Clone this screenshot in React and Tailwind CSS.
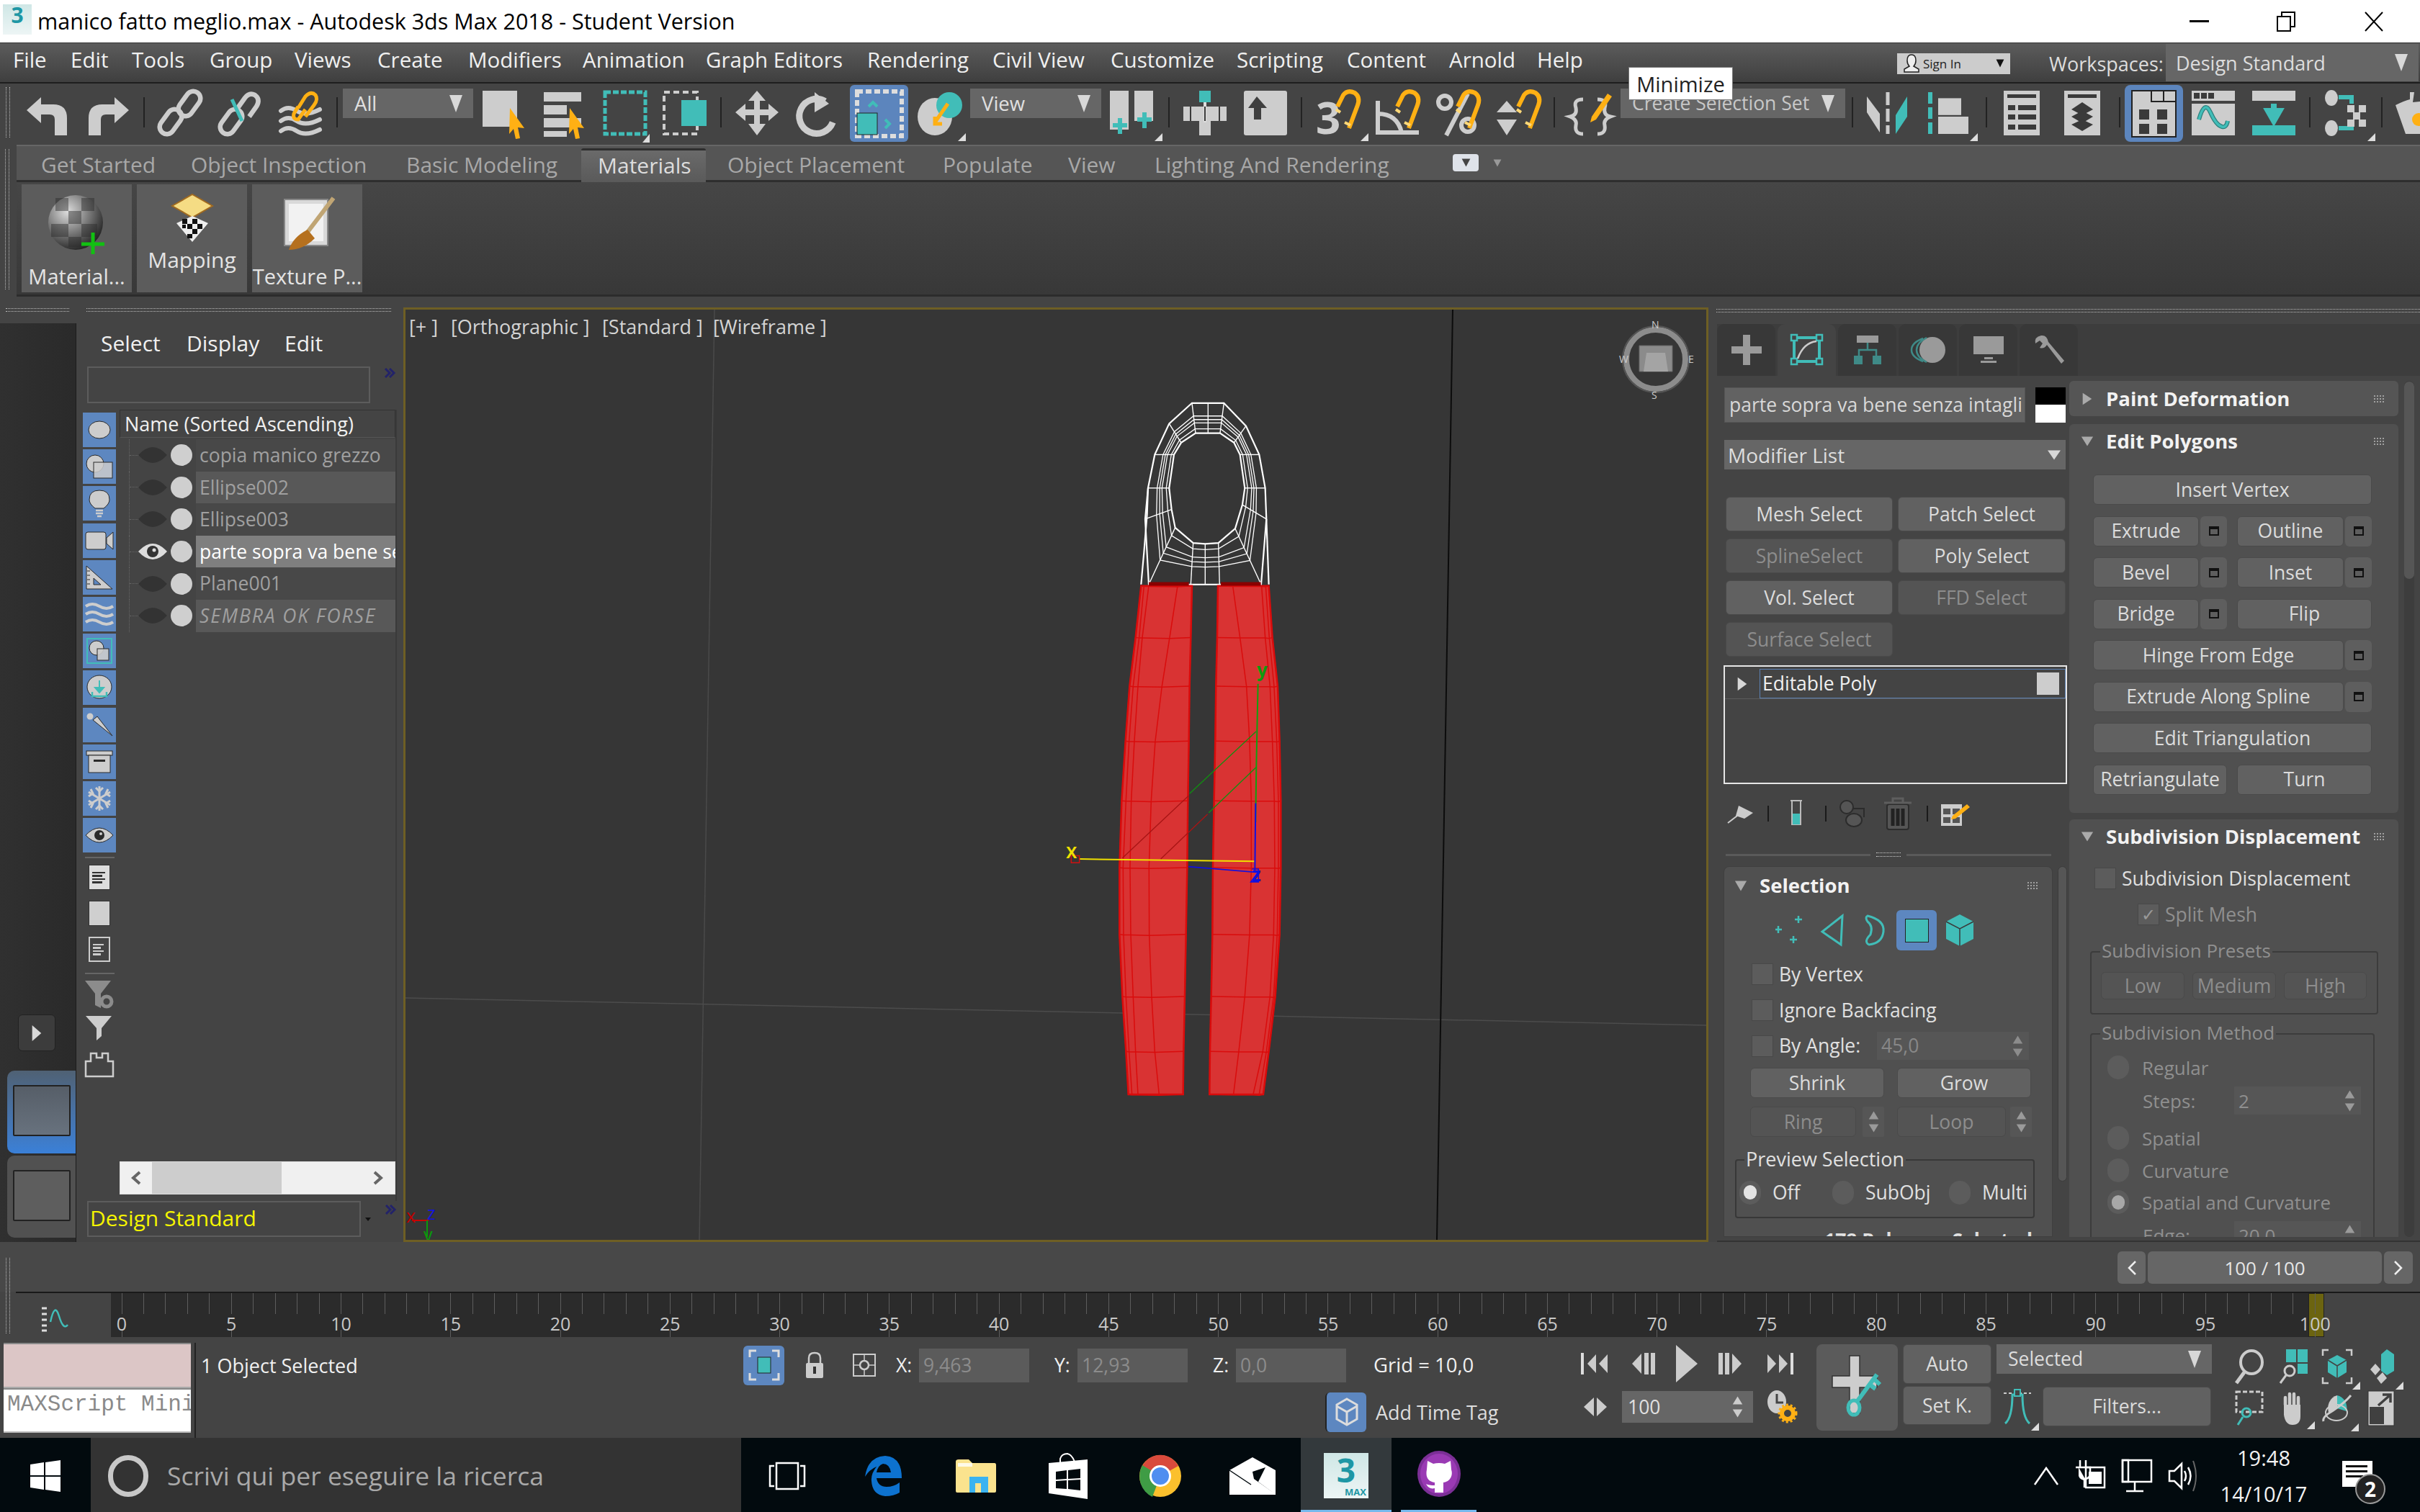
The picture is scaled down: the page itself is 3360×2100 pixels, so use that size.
import React from "react";

const G = "#cdcdcd", T = "#41bdb8", O = "#ffb014", D = "#3a3a3a";

const Ic = ({ c = "w-[60px] h-[60px]", v = "0 0 60 60", children }) => (
  <svg viewBox={v} className={c + " shrink-0 overflow-visible"}>{children}</svg>
);
const Fly = ({ x = 58, y = 70 }) => <polygon points={`${x},${y} ${x + 11},${y} ${x + 11},${y - 11}`} fill="#ddd" />;
const Tri = ({ c = "w-[20px] h-[26px]", down = true, col = "#d8d8d8" }) => (
  <svg viewBox="0 0 20 26" preserveAspectRatio="none" className={c + " shrink-0"}><polygon points={down ? "1,1 19,1 10,25" : "1,25 19,25 10,1"} fill={col} /></svg>
);
const RA = ({ c = "w-[12px] h-[18px]", col = "#d8d8d8" }) => (
  <svg viewBox="0 0 20 26" preserveAspectRatio="none" className={c + " shrink-0"}><polygon points="1,1 19,13 1,25" fill={col} /></svg>
);
const Chev = () => (
  <Ic c="w-[15px] h-[14px]" v="0 0 15 14"><path d="M1 1 L7 7 L1 13 M7 1 L13 7 L7 13" fill="none" stroke="#232369" strokeWidth="3" /></Ic>
);
const Sep = ({ c }) => <div className={"w-[2px] h-[42px] bg-[#222] shrink-0 " + c} />;

const Drop = ({ c, t, tc = "text-[#e0e0e0] text-[27.5px]" }) => (
  <div className={"flex items-center justify-between bg-[#666] shrink-0 pl-[16px] pr-[14px] " + c}>
    <span className={"leading-none whitespace-nowrap " + tc}>{t}</span>
    <Tri />
  </div>
);

const Wave = ({ y = 0, col = G, sw = 6 }) => <path d={`M2 ${y + 6} Q12 ${y - 2} 24 ${y + 6} T56 ${y + 4}`} fill="none" stroke={col} strokeWidth={sw} strokeLinecap="round" />;
const Cursor = ({ x = 0, y = 0 }) => <polygon transform={`translate(${x} ${y})`} points="0,0 20,28 11,27 14,42 8,43 5,29 -1,36" fill={O} />;
const Magnet = ({ x = 0, y = 0 }) => (
  <g transform={`translate(${x} ${y})`} fill="none" stroke={O} strokeWidth="6">
    <path d="M2 22 L10 6 Q16 -2 26 3 Q34 9 30 20 L18 52" />
    <path d="M0 26 L6 30 M12 44 L20 48" stroke="#ffd878" strokeWidth="4" />
  </g>
);

const Undo = ({ flip }) => (
  <Ic><path transform={flip ? "matrix(-1 0 0 1 60 0)" : undefined} d="M1 27 L21 9 V19 H38 Q57 19 57 38 V62 H40 V40 Q40 33 33 33 H21 V45 Z" fill={G} /></Ic>
);

const LinkIc = ({ mid }) => (
  <Ic>
    <g fill="none" stroke={G} strokeWidth="6.5">
      <rect x="7" y="24" width="20" height="38" rx="10" transform="rotate(36 17 43)" />
      {!mid && <rect x="33" y="-1" width="20" height="38" rx="10" transform="rotate(36 43 18)" />}
      {mid && <path d="M26 24 L36 10 Q42 2 50 6 Q58 12 52 22 L42 36" />}
    </g>
    {mid && <path d="M18 12 L32 42" stroke={T} strokeWidth="5" />}
  </Ic>
);

const Bar4 = () => (
  <g fill={G}>
    <rect x="2" y="2" width="52" height="13" /><rect x="2" y="20" width="32" height="13" /><rect x="2" y="38" width="52" height="13" /><rect x="2" y="56" width="32" height="8" />
  </g>
);

const Toolbar = () => (
  <div className="h-[85px] flex items-center bg-[#444] shrink-0 relative pb-[5px]">
    <div className="w-[6px] h-[70px] ml-[8px] border-x border-dotted border-[#bbb] shrink-0" />
    <div className="ml-[22px]"><Undo /></div>
    <div className="ml-[24px]"><Undo flip /></div>
    <Sep c="mx-[19px]" />
    <LinkIc />
    <div className="ml-[24px]"><LinkIc mid /></div>
    <div className="ml-[24px]"><Ic>
      <Wave y={22} /><Wave y={36} /><Wave y={50} />
      <g fill="none" stroke={O} strokeWidth="5"><path d="M26 22 L20 32 Q18 40 26 40 L36 26" /><path d="M26 24 L36 8 Q44 0 50 6 Q54 12 48 20 L36 36" /></g>
    </Ic></div>
    <Sep c="ml-[19px] mr-[7px]" />
    <Drop c="w-[181px] h-[41px] mb-[-2px] self-start mt-[7px]" t="All" />
    <div className="ml-[13px]"><Ic>
      <rect x="0" y="0" width="48" height="50" fill={G} /><Cursor x={38} y={24} />
    </Ic></div>
    <div className="ml-[23px]"><Ic><Bar4 /><Cursor x={38} y={24} /></Ic></div>
    <div className="ml-[25px]"><Ic>
      <rect x="2" y="2" width="56" height="58" fill="none" stroke={T} strokeWidth="5" strokeDasharray="8 3" />
      <polygon points="54,72 64,72 64,60" fill="#ddd" />
    </Ic></div>
    <div className="ml-[23px]"><Ic>
      <rect x="1" y="2" width="46" height="58" fill="none" stroke={G} strokeWidth="4" strokeDasharray="8 5" /><rect x="25" y="13" width="35" height="36" fill={T} />
    </Ic></div>
    <Sep c="mx-[19px]" />
    <Ic>
      <path d="M30 0 L42 14 H34 V26 H46 V18 L60 30 L46 42 V34 H34 V46 H42 L30 62 L18 46 H26 V34 H14 V42 L0 30 L14 18 V26 H26 V14 H18 Z" fill={G} />
    </Ic>
    <div className="ml-[24px]"><Ic>
      <path d="M34 12 A24 24 0 1 0 54 36" fill="none" stroke={G} strokeWidth="9" transform="rotate(20 30 32)" />
      <polygon points="26,2 46,18 26,30" fill={G} />
    </Ic></div>
    <div className="ml-[15px] mt-[3px] w-[81px] h-[79px] bg-[#5c85bd] rounded-[6px] flex items-center justify-center shrink-0"><Ic c="w-[70px] h-[68px]" v="0 0 70 68">
      <rect x="4" y="3" width="62" height="62" fill="none" stroke="#ddd" strokeWidth="6" strokeDasharray="8 4" />
      <rect x="4" y="33" width="28" height="30" fill={T} stroke="#222" />
      <path d="M20 24 l6 -6 l6 6 M43 42 l6 6 l-6 6" fill="none" stroke={T} strokeWidth="4" />
    </Ic></div>
    <div className="ml-[13px]"><Ic>
      <ellipse cx="24" cy="36" rx="24" ry="26" fill={G} /><circle cx="44" cy="20" r="18" fill={T} />
      <path d="M42 18 L24 44 M24 36 V46 H34" stroke={O} strokeWidth="5" fill="none" />
      <Fly x={56} />
    </Ic></div>
    <Drop c="w-[182px] h-[41px] self-start mt-[7px] ml-[13px]" t="View" />
    <div className="ml-[12px]"><Ic>
      <rect x="0" y="0" width="26" height="54" fill={G} /><rect x="34" y="0" width="26" height="42" fill={G} />
      <path d="M14 38 V60 M4 48 H24 M48 30 V52 M38 40 H58" stroke={T} strokeWidth="6" />
      <Fly x={62} />
    </Ic></div>
    <Sep c="ml-[21px] mr-[19px]" />
    <Ic>
      <rect x="22" y="0" width="16" height="16" fill={T} /><rect x="0" y="22" width="60" height="20" fill={G} />
      <rect x="22" y="42" width="16" height="20" fill={G} /><path d="M30 16 V44" stroke="#ddd" strokeWidth="4" />
      <path d="M10 22 v20 M30 22 V42 M50 22 V42" stroke="#3a3a3a" strokeWidth="2" />
    </Ic>
    <div className="ml-[24px]"><Ic>
      <rect x="0" y="0" width="60" height="62" rx="3" fill={G} />
      <path d="M18 8 L6 24 H14 V40 H24 V24 H32 Z" fill="#3f3f3f" />
    </Ic></div>
    <Sep c="mx-[19px]" />
    <Ic>
      <text x="0" y="60" fontSize="60" fontWeight="700" fill={G} fontFamily="Open Sans">3</text>
      <Magnet x={28} y={0} /><Fly x={62} />
    </Ic>
    <div className="ml-[23px]"><Ic>
      <path d="M3 14 V58 H60 M3 58 V32 Q30 32 36 58" fill="none" stroke={G} strokeWidth="6" />
      <Magnet x={28} y={0} />
    </Ic></div>
    <div className="ml-[24px]"><Ic>
      <circle cx="12" cy="16" r="9" fill="none" stroke={G} strokeWidth="6" /><circle cx="44" cy="48" r="9" fill="none" stroke={G} strokeWidth="6" />
      <path d="M44 4 L14 62" stroke={G} strokeWidth="6" /><Magnet x={28} y={0} />
    </Ic></div>
    <div className="ml-[24px]"><Ic>
      <polygon points="14,14 28,30 0,30" fill={G} /><polygon points="0,40 28,40 14,62" fill={G} /><Magnet x={28} y={0} />
    </Ic></div>
    <Sep c="mx-[19px]" />
    <Ic>
      <path d="M20 12 Q6 12 10 24 Q12 34 2 36 Q12 40 10 48 Q8 60 20 60 M40 12 Q54 12 50 24 Q48 34 58 36 Q48 40 50 48 Q52 60 40 60" fill="none" stroke={G} strokeWidth="5" />
      <path d="M32 36 L54 4 L60 8 L38 40 L30 44 Z" fill={O} />
    </Ic>
    <div className="w-[14px]" />
    <Drop c="w-[312px] h-[41px] self-start mt-[7px] pl-[10px]" t="Create Selection Set" tc="text-[#c8c8c8] text-[26.5px]" />
    <Sep c="ml-[9px] mr-[19px]" />
    <Ic>
      <polygon points="0,12 18,36 18,62 0,34" fill={G} transform="translate(0 -4)" />
      <path d="M29 2 V60" stroke={G} strokeWidth="5" strokeDasharray="18 5" /><polygon points="56,8 40,34 40,60 56,36" fill={T} />
    </Ic>
    <div className="ml-[25px]"><Ic>
      <path d="M3 2 V62" stroke={T} strokeWidth="6" strokeDasharray="16 5" /><rect x="14" y="12" width="32" height="18" fill={G} transform="scale(1 1.3) translate(0 -4)" /><rect x="14" y="36" width="42" height="24" fill={G} /><Fly x={58} />
    </Ic></div>
    <Sep c="ml-[20px] mr-[21px]" />
    <Ic>
      <rect x="2" y="0" width="50" height="62" fill={G} />
      <g fill="#3a3a3a"><rect x="7" y="5" width="40" height="5" /><rect x="8" y="20" width="10" height="7" /><rect x="22" y="20" width="25" height="7" /><rect x="8" y="33" width="10" height="7" /><rect x="22" y="33" width="25" height="7" /><rect x="8" y="47" width="10" height="7" /><rect x="22" y="47" width="25" height="7" /></g>
    </Ic>
    <div className="ml-[24px]"><Ic>
      <rect x="2" y="0" width="50" height="62" fill={G} /><rect x="7" y="5" width="40" height="5" fill="#3a3a3a" />
      <g fill="#3a3a3a"><polygon points="27,16 42,26 27,34 12,26" /><polygon points="27,28 42,36 27,45 12,36" /><polygon points="27,40 42,47 27,56 12,47" /></g>
    </Ic></div>
    <Sep c="ml-[18px] mr-[6px]" />
    <div className="w-[81px] h-[79px] mt-[3px] bg-[#5c85bd] rounded-[8px] flex items-center justify-center shrink-0"><Ic c="w-[64px] h-[66px]" v="0 0 64 66">
      <path d="M1 1 H28 V16 H62 V65 H1 Z" fill={G} stroke="#222" strokeWidth="2" /><path d="M28 1 H62 V16 H28 Z M45 1 V16" fill={G} stroke="#222" strokeWidth="2" />
      <g fill="#3a3a3a"><rect x="11" y="27" width="14" height="14" /><rect x="36" y="27" width="14" height="14" /><rect x="11" y="47" width="14" height="14" /><rect x="36" y="47" width="14" height="14" /></g>
    </Ic></div>
    <div className="ml-[12px]"><Ic>
      <rect x="0" y="0" width="60" height="14" fill={G} /><g fill="#3a3a3a"><rect x="3" y="3" width="8" height="8" /><rect x="13" y="3" width="8" height="8" /><rect x="23" y="3" width="8" height="8" /></g>
      <rect x="0" y="18" width="60" height="44" fill={G} />
      <path d="M10 40 Q18 12 26 30 T42 50 Q48 52 50 42" fill="none" stroke="#2c7f7c" strokeWidth="6" /><path d="M10 40 Q18 12 26 30 T42 50 Q48 52 50 42" fill="none" stroke={T} strokeWidth="3.5" />
    </Ic></div>
    <div className="ml-[24px]"><Ic>
      <rect x="0" y="0" width="60" height="14" fill={G} /><rect x="0" y="48" width="60" height="14" fill={T} />
      <path d="M30 18 V28 M22 28 H38 L30 42 Z" stroke={T} strokeWidth="8" fill={T} />
    </Ic></div>
    <Sep c="mx-[19px]" />
    <Ic>
      <ellipse cx="10" cy="10" rx="9" ry="11" fill={G} /><ellipse cx="10" cy="52" rx="9" ry="11" fill={G} />
      <path d="M20 9 H38 V18 M20 52 H38 V44" stroke={T} strokeWidth="6" fill="none" />
      <g fill={G}><rect x="32" y="20" width="10" height="10" /><rect x="48" y="20" width="10" height="10" /><rect x="40" y="30" width="10" height="10" /><rect x="32" y="40" width="10" height="10" /><rect x="48" y="40" width="10" height="10" /></g>
      <Fly x={60} />
    </Ic>
    <Sep c="ml-[19px] mr-[16px]" />
    <Ic c="w-[36px] h-[60px]" v="0 0 36 60">
      <path d="M2 20 Q14 14 22 12 V2 H28 L26 16 L44 14 L36 60 H16 Z" fill={G} /><circle cx="34" cy="40" r="9" fill={O} />
    </Ic>

    <div className="absolute left-[2261px] top-[-23px] w-[145px] h-[46px] bg-white border border-[#777] flex items-center justify-center z-30">
      <span className="text-[29px] leading-none text-[#222]">Minimize</span>
    </div>
  </div>
);

const Menu = () => {
  const items = [
    ["File", "w-[80px]"], ["Edit", "w-[85px]"], ["Tools", "w-[108px]"], ["Group", "w-[118px]"], ["Views", "w-[115px]"], ["Create", "w-[126px]"],
    ["Modifiers", "w-[159px]"], ["Animation", "w-[171px]"], ["Graph Editors", "w-[224px]"], ["Rendering", "w-[174px]"], ["Civil View", "w-[164px]"],
    ["Customize", "w-[175px]"], ["Scripting", "w-[153px]"], ["Content", "w-[142px]"], ["Arnold", "w-[122px]"], ["Help", "w-[90px]"],
  ];
  return (
    <div className="h-[57px] flex items-center bg-linear-to-b from-[#5c5c5c] to-[#3f3f3f] border-b-2 border-[#1e1e1e] border-t border-t-[#333] pl-[18px] shrink-0 relative pb-[8px]">
      {items.map(([t, w]) => <div key={t} className={"text-[29.5px] leading-none text-[#f0f0f0] whitespace-nowrap shrink-0 " + w}>{t}</div>)}
      <div className="ml-[410px] w-[157px] h-[29px] bg-[#ccc] flex items-center pl-[8px] shrink-0 mt-[10px]">
        <Ic c="w-[24px] h-[26px]" v="0 0 24 26"><path d="M12 1 Q18 1 18 9 Q18 14 15 17 L22 21 V25 H2 V21 L9 17 Q6 14 6 9 Q6 1 12 1Z" fill="#eee" stroke="#222" strokeWidth="1.5" /></Ic>
        <span className="text-[17px] ml-[4px] leading-none text-[#222]">Sign In</span>
        <div className="ml-auto mr-[8px]"><Tri c="w-[12px] h-[12px]" col="#111" /></div>
      </div>
      <div className="ml-[54px] text-[27px] leading-none text-[#ddd] shrink-0 w-[162px] mt-[10px] whitespace-nowrap">Workspaces:</div>
      <div className="w-[351px] h-[52px] self-start mt-[1px] bg-[#666] flex items-center justify-between pl-[14px] pr-[14px] shrink-0">
        <span className="text-[27px] leading-none text-[#ddd]">Design Standard</span><Tri />
      </div>
    </div>
  );
};

const Ribbon = () => {
  const tabs = [["Get Started", "w-[208px]"], ["Object Inspection", "w-[299px]"], ["Basic Modeling", "w-[243px]"]];
  const tabs2 = [["Object Placement", "w-[299px]"], ["Populate", "w-[174px]"], ["View", "w-[120px]"], ["Lighting And Rendering", "w-[414px]"]];
  return (
    <div className="flex shrink-0 h-[211px]">
      <div className="w-[23px] shrink-0 flex justify-start pl-[7px] pt-[6px]"><div className="w-[6px] h-[195px] border-x border-dotted border-[#bbb]" /></div>
      <div className="flex-1 flex flex-col">
        <div className="h-[55px] bg-[#555] border-b-[3px] border-[#2e2e2e] border-t-2 border-t-[#666] flex items-end pl-[34px] text-[#a8a8a8]">
          {tabs.map(([t, w]) => <div key={t} className={"text-[30px] leading-none h-[46px] pt-[3px] flex items-center whitespace-nowrap shrink-0 " + w}>{t}</div>)}
          <div className="w-[173px] h-[47px] shrink-0 bg-linear-to-b from-[#6a6a6a] to-[#5a5a5a] border-t-[3px] border-[#2e2e2e] rounded-t-[3px] mb-[-3px] flex items-center pl-[23px] pb-[3px] text-[30px] leading-none text-[#ddd]">Materials</div>
          <div className="w-[30px] shrink-0" />
          {tabs2.map(([t, w]) => <div key={t} className={"text-[30px] leading-none h-[46px] pt-[3px] flex items-center whitespace-nowrap shrink-0 " + w}>{t}</div>)}
          <div className="w-[36px] h-[24px] rounded-[4px] bg-[#dfe3ea] flex items-center justify-center shrink-0 mb-[12px]"><Tri c="w-[13px] h-[12px]" col="#444" /></div>
          <div className="ml-[20px] mb-[18px]"><Tri c="w-[12px] h-[11px]" col="#999" /></div>
        </div>
        <div className="flex-1 bg-linear-to-b from-[#464646] to-[#383838] border-b-[3px] border-[#2c2c2c] flex gap-[7px] pl-[7px] pt-[3px] pb-[3px]">
          <RibBtn t="Material...">
            <Ic c="w-[80px] h-[88px]" v="0 0 80 88">
              <defs><radialGradient id="ballg" cx="35%" cy="30%" r="75%"><stop offset="0" stopColor="#ddd" /><stop offset="1" stopColor="#222" /></radialGradient></defs>
              <circle cx="38" cy="40" r="38" fill="url(#ballg)" />
              <g fill="#2a2a2a" fillOpacity=".45"><rect x="10" y="6" width="18" height="18" /><rect x="46" y="6" width="18" height="18" /><rect x="28" y="24" width="18" height="18" /><rect x="4" y="42" width="24" height="18" /><rect x="46" y="42" width="22" height="18" /><rect x="28" y="60" width="18" height="14" /></g>
              <path d="M62 54 V84 M46 70 H78" stroke="#12c012" strokeWidth="5" />
            </Ic>
          </RibBtn>
          <RibBtn t="Mapping" up>
            <Ic c="w-[60px] h-[66px]" v="0 0 60 66">
              <polygon points="30,0 58,16 30,32 2,16" fill="#f5dc84" stroke="#a06a20" strokeWidth="2" />
              <polygon points="30,30 52,40 30,66 8,40" fill="#eee" />
              <g fill="#111"><rect x="16" y="34" width="7" height="7" /><rect x="30" y="34" width="7" height="7" /><rect x="23" y="41" width="7" height="7" /><rect x="37" y="41" width="7" height="7" /><rect x="16" y="42" width="5" height="5" /><rect x="30" y="48" width="7" height="7" /><rect x="23" y="55" width="7" height="6" /></g>
            </Ic>
          </RibBtn>
          <RibBtn t="Texture P...">
            <Ic c="w-[84px] h-[76px]" v="0 0 84 76">
              <rect x="10" y="2" width="60" height="64" fill="#d9d9d9" stroke="#888" strokeWidth="2" /><rect x="16" y="8" width="48" height="52" fill="#f2f2f2" />
              <path d="M78 0 L40 50" stroke="#c0a574" strokeWidth="6" />
              <path d="M42 44 Q22 54 16 72 Q36 72 52 56 Z" fill="#b5701e" />
            </Ic>
          </RibBtn>
        </div>
      </div>
    </div>
  );
};
const RibBtn = ({ t, children, up }) => (
  <div className="w-[153px] h-[150px] bg-[#5c5c5c] flex flex-col items-center pt-[12px]">
    <div className={"h-[90px] flex items-center justify-center " + (up ? "mt-[-10px]" : "")}>{children}</div>
    <div className={"text-[29px] leading-none text-[#e4e4e4] whitespace-nowrap " + (up ? "mt-[-2px] text-[30px]" : "mt-[11px]")}>{t}</div>
  </div>
);

const Tile = ({ children }) => <div className="w-[46px] h-[48px] bg-[#5d87c0] flex items-center justify-center shrink-0">{children}</div>;
const S = "#2a2a2a";
const Explorer = () => {
  const rows = [
    ["copia manico grezzo", "bg-[#484848]", "text-[#a0a0a0]"],
    ["Ellipse002", "bg-[#585858]", "text-[#a0a0a0]"],
    ["Ellipse003", "bg-[#484848]", "text-[#a0a0a0]"],
    ["parte sopra va bene senza intagli", "bg-[#7f7f7f]", "text-white"],
    ["Plane001", "bg-[#484848]", "text-[#a0a0a0]"],
    ["SEMBRA OK FORSE", "bg-[#585858]", "text-[#a0a0a0] italic tracking-[1.9px]"],
  ];
  return (
    <div className="w-[455px] h-full bg-[#444] flex flex-col shrink-0 border-l border-[#1c1c1c]">
      <div className="h-[56px] flex items-center pl-[34px] text-[30px] leading-none text-[#f0f0f0] shrink-0">
        <span className="w-[119px]">Select</span><span className="w-[136px]">Display</span><span>Edit</span>
      </div>
      <div className="flex items-start shrink-0 mt-[4px]">
        <div className="ml-[15px] w-[393px] h-[51px] border-2 border-[#5c5c5c]" />
        <div className="ml-[20px] mt-[2px]"><Chev /></div>
      </div>
      <div className="flex flex-1 mt-[9px] min-h-0">
        <div className="w-[60px] pl-[9px] shrink-0 flex flex-col gap-[3.2px] pt-[4px] items-start">
          <Tile><Ic c="w-[32px] h-[26px]" v="0 0 32 26"><ellipse cx="16" cy="13" rx="15" ry="12" fill={G} stroke={S} /></Ic></Tile>
          <Tile><Ic c="w-[38px] h-[34px]" v="0 0 38 34"><ellipse cx="13" cy="13" rx="12" ry="12" fill={G} stroke={S} /><rect x="11" y="11" width="26" height="22" fill={G} fillOpacity=".85" stroke={S} /></Ic></Tile>
          <Tile><Ic c="w-[30px] h-[38px]" v="0 0 30 38"><path d="M15 1 Q29 1 29 14 Q29 20 21 26 H9 Q1 20 1 14 Q1 1 15 1Z" fill={G} stroke={S} /><path d="M10 29 H20 M10 33 H20 M12 37 H18" stroke={G} strokeWidth="2.5" /></Ic></Tile>
          <Tile><Ic c="w-[40px] h-[28px]" v="0 0 40 28"><rect x="1" y="2" width="28" height="24" rx="3" fill={G} stroke={S} /><polygon points="30,10 39,2 39,26 30,18" fill={G} stroke={S} /></Ic></Tile>
          <Tile><Ic c="w-[38px] h-[34px]" v="0 0 38 34"><polygon points="1,1 37,33 1,33" fill={G} stroke={S} /><polygon points="11,18 11,27 21,27" fill="#5d87c0" stroke={S} /><path d="M2 8 h4 M2 14 h4 M2 20 h4 M2 26 h4" stroke={S} /></Ic></Tile>
          <Tile><Ic c="w-[40px] h-[34px]" v="0 0 40 34"><g fill="none" stroke={G} strokeWidth="4"><path d="M1 6 Q10 0 20 6 T39 6" /><path d="M1 17 Q10 11 20 17 T39 17" /><path d="M1 28 Q10 22 20 28 T39 28" /></g></Ic></Tile>
          <Tile><Ic c="w-[36px] h-[36px]" v="0 0 36 36"><rect x="1" y="1" width="34" height="34" fill="none" stroke={T} strokeWidth="2" /><circle cx="14" cy="14" r="10" fill={G} stroke={S} /><rect x="15" y="15" width="16" height="16" fill={G} fillOpacity=".9" stroke={S} /></Ic></Tile>
          <Tile><Ic c="w-[36px] h-[36px]" v="0 0 36 36"><ellipse cx="18" cy="17" rx="17" ry="16" fill={G} stroke={S} /><path d="M18 8 V18 M12 18 H24 L18 25 Z" fill={T} stroke={T} strokeWidth="2" /><path d="M8 24 V30 H28 V24" fill="none" stroke={T} strokeWidth="2.5" /></Ic></Tile>
          <Tile><Ic c="w-[38px] h-[34px]" v="0 0 38 34"><circle cx="6" cy="5" r="4.5" fill={G} /><polygon points="10,10 16,5 37,32" fill={G} stroke={S} /></Ic></Tile>
          <Tile><Ic c="w-[36px] h-[30px]" v="0 0 36 30"><rect x="0" y="0" width="36" height="6" fill={G} stroke={S} /><rect x="3" y="6" width="30" height="24" fill={G} stroke={S} /><rect x="10" y="12" width="16" height="3" fill={S} /></Ic></Tile>
          <Tile><Ic c="w-[34px] h-[36px]" v="0 0 34 36"><g stroke={G} strokeWidth="3" fill="none"><path d="M17 1 V35 M2 9 L32 27 M32 9 L2 27" /><path d="M12 3 L17 8 L22 3 M12 33 L17 28 L22 33 M2 15 L8 11 L5 5 M32 15 L26 11 L29 5 M2 21 L8 25 L5 31 M32 21 L26 25 L29 31" /></g></Ic></Tile>
          <Tile><Ic c="w-[40px] h-[24px]" v="0 0 40 24"><path d="M1 12 Q20 -8 39 12 Q20 32 1 12Z" fill={G} stroke={S} /><circle cx="20" cy="12" r="7" fill={S} /><circle cx="22" cy="10" r="2" fill={G} /></Ic></Tile>
          <div className="w-[41px] h-[2px] bg-[#666] mt-[3px] ml-[3px] mb-[6px]" />
          <div className="ml-[8px] flex flex-col items-start gap-[15px]">
            <div className="w-[30px] h-[35px] bg-[#ddd] border border-[#333] flex flex-col justify-center pl-[4px] gap-[2px]"><div className="w-[18px] h-[2.5px] bg-[#333]" /><div className="w-[14px] h-[2.5px] bg-[#333]" /><div className="w-[18px] h-[2.5px] bg-[#333]" /><div className="w-[14px] h-[2.5px] bg-[#333]" /></div>
            <div className="w-[30px] h-[35px] bg-[#cfcfcf] border border-[#333]" />
            <div className="w-[30px] h-[35px] border-2 border-[#ccc] flex flex-col justify-center pl-[4px] gap-[2px]"><div className="w-[15px] h-[2.5px] bg-[#ccc]" /><div className="w-[11px] h-[2.5px] bg-[#ccc]" /><div className="w-[15px] h-[2.5px] bg-[#ccc]" /><div className="w-[11px] h-[2.5px] bg-[#ccc]" /></div>
          </div>
          <div className="w-[41px] h-[2px] bg-[#666] mt-[11px] ml-[3px] mb-[6px]" />
          <Ic c="w-[40px] h-[38px] ml-[3px]" v="0 0 40 38"><polygon points="0,0 36,0 22,18 22,38 14,34 14,18" fill="#8c8c8c" /><circle cx="30" cy="29" r="7" fill="none" stroke="#8c8c8c" strokeWidth="5" /></Ic>
          <Ic c="w-[36px] h-[34px] ml-[4px] mt-[8px]" v="0 0 36 34"><polygon points="0,0 36,0 22,17 22,28 15,34 15,17" fill={G} /></Ic>
          <Ic c="w-[40px] h-[34px] ml-[3px] mt-[14px]" v="0 0 40 34"><path d="M1 12 H8 V1 H16 V7 H24 V1 H32 V12 H39 V33 H1 Z" fill="none" stroke={G} strokeWidth="2.5" /></Ic>
        </div>
        <div className="flex-1 min-w-0 flex flex-col border-r-2 border-[#3a3a3a] mr-[9px]">
          <div className="h-[39px] border border-[#333] border-b-[#555] flex items-center pl-[6px] text-[27px] leading-none text-[#f0f0f0] whitespace-nowrap shrink-0">Name (Sorted Ascending)</div>
          <div className="h-[2px] shrink-0" />
          {rows.map(([t, bg, tc], i) => (
            <div key={t} className="h-[44.6px] flex items-center shrink-0">
              <div className="w-[13px] h-full ml-[13px] border-l border-dotted border-[#666] flex items-center shrink-0"><div className="w-full border-t border-dotted border-[#666]" /></div>
              <Ic c="w-[40px] h-[24px]" v="0 0 40 24">
                <path d="M0 12 Q20 -10 40 12 Q20 34 0 12Z" fill={i === 3 ? "#ddd" : "#333"} />
                {i === 3 && <><circle cx="20" cy="12" r="8" fill="#333" /><circle cx="22" cy="10" r="2.5" fill="#ddd" /></>}
              </Ic>
              <div className="w-[30px] h-[30px] rounded-full bg-[#cfcfcf] ml-[5px] shrink-0" />
              <div className={"ml-[5px] h-full flex-1 min-w-0 overflow-hidden flex items-center pl-[5px] text-[26.5px] leading-none whitespace-nowrap " + bg + " " + tc}>{t}</div>
            </div>
          ))}
          <div className="flex-1" />
          <div className="h-[46px] bg-[#f0f0f0] border border-[#ddd] flex items-center shrink-0">
            <div className="w-[44px] flex justify-center"><Ic c="w-[14px] h-[20px]" v="0 0 14 20"><path d="M12 2 L3 10 L12 18" fill="none" stroke="#666" strokeWidth="4" /></Ic></div>
            <div className="w-[180px] h-full bg-[#cdcdcd]" />
            <div className="flex-1 flex justify-end pr-[16px]"><Ic c="w-[14px] h-[20px]" v="0 0 14 20"><path d="M2 2 L11 10 L2 18" fill="none" stroke="#666" strokeWidth="4" /></Ic></div>
          </div>
          <div className="h-[9px] shrink-0" />
        </div>
      </div>
      <div className="flex items-center shrink-0 mb-[7px]">
        <div className="ml-[15px] w-[380px] h-[50px] border-2 border-[#5c5c5c] flex items-center pl-[2px] pb-[2px] text-[30px] leading-none text-[#f5f500] whitespace-nowrap">Design Standard</div>
        <div className="ml-[6px] w-0 h-0 border-x-[4px] border-x-transparent border-t-[5px] border-t-[#111]" />
        <div className="ml-[20px] mt-[-26px]"><Chev /></div>
      </div>
    </div>
  );
};

const leftRows = [
  [553, 565, 585, 705, 765, 440], [530, 545, 558, 672, 760, 548], [505, 520, 540, 640, 755, 650], [488, 503, 525, 612, 752, 765],
  [472, 490, 512, 595, 748, 890], [463, 478, 507, 586, 745, 1030], [463, 480, 510, 587, 740, 1170], [475, 490, 520, 597, 735, 1300],
  [490, 503, 530, 610, 730, 1415], [500, 515, 540, 628, 728, 1505],
];
const rightRows = [
  [873, 935, 1055, 1072, 1085, 440], [870, 965, 1070, 1087, 1100, 548], [865, 992, 1090, 1107, 1122, 650], [862, 1005, 1100, 1118, 1130, 765],
  [857, 1012, 1108, 1125, 1135, 890], [852, 1012, 1110, 1125, 1135, 1030], [850, 1005, 1105, 1120, 1130, 1170], [845, 985, 1090, 1105, 1112, 1300],
  [840, 960, 1060, 1075, 1085, 1415], [838, 938, 1020, 1045, 1062, 1505],
];
const Strip = ({ rows, first, last }) => {
  const outline = [...rows.map(r => `${r[first]},${r[5]}`), ...rows.slice().reverse().map(r => `${r[last]},${r[5]}`)].join(" ");
  return (
    <g stroke="#d90c0c" fill="none">
      <polygon points={outline} fill="#d93333" strokeWidth="2.5" vectorEffect="non-scaling-stroke" />
      {rows.map((r, i) => <path key={i} d={`M${r[0]} ${r[5]} L${r[1]} ${r[5] + 1} L${r[2]} ${r[5] + 1} L${r[3]} ${r[5] + 2} L${r[4]} ${r[5]}`} strokeWidth="1.5" vectorEffect="non-scaling-stroke" />)}
      {[0, 1, 2, 3, 4].map(c => <polyline key={c} points={rows.map(r => `${r[c]},${r[5]}`).join(" ")} strokeWidth="1.5" vectorEffect="non-scaling-stroke" />)}
    </g>
  );
};
const A = [[582, 235], [610, 165], [670, 100], [765, 57], [832, 57], [898, 57], [990, 105], [1045, 165], [1070, 235], [1075, 300], [1053, 437], [880, 437], [820, 437], [760, 437], [585, 437], [570, 300]];
const H = [[670, 235], [690, 165], [720, 140], [780, 120], [832, 120], [882, 120], [940, 140], [965, 165], [985, 235], [975, 270], [945, 320], [875, 350], [820, 352], [770, 350], [695, 318], [680, 280]];
const ring = t => A.map((p, i) => `${p[0] + (H[i][0] - p[0]) * t},${p[1] + (H[i][1] - p[1]) * t}`).join(" ");
const Mesh = () => (
  <g transform="translate(1400 520) scale(0.3333 0.6631)">
    <g stroke="#ffffff" fill="none" vectorEffect="non-scaling-stroke">
      {[0, 0.43, 0.55, 0.66, 0.86, 1].map(t => <polygon key={t} points={ring(t)} strokeWidth={t === 0 || t === 1 ? 2.2 : 1.3} vectorEffect="non-scaling-stroke" />)}
      {A.map((p, i) => <line key={i} x1={p[0]} y1={p[1]} x2={H[i][0]} y2={H[i][1]} strokeWidth="1.4" vectorEffect="non-scaling-stroke" />)}
      <polyline points="553,437 565,370 578,290 582,235" strokeWidth="2.2" vectorEffect="non-scaling-stroke" />
      <polyline points="1085,437 1075,300" strokeWidth="2.2" vectorEffect="non-scaling-stroke" />
      <line x1="585" y1="437" x2="1053" y2="437" strokeWidth="1.4" vectorEffect="non-scaling-stroke" />
    </g>
    <Strip rows={leftRows} first={0} last={4} />
    <Strip rows={rightRows} first={0} last={4} />
    <path d="M585 436 H752 M885 436 H1052" stroke="#8a0000" strokeWidth="5" vectorEffect="non-scaling-stroke" />
    <g fill="none" vectorEffect="non-scaling-stroke">
      <path d="M295 1012 L1025 1017" stroke="#f0e000" strokeWidth="2" vectorEffect="non-scaling-stroke" />
      <rect x="262" y="1005" width="34" height="15" stroke="#d01010" strokeWidth="1.5" vectorEffect="non-scaling-stroke" />
      <path d="M1040 645 L1033 820 L1030 935" stroke="#10a010" strokeWidth="2" vectorEffect="non-scaling-stroke" />
      <path d="M1030 895 L1027 1040" stroke="#1010e0" strokeWidth="2" vectorEffect="non-scaling-stroke" />
      <path d="M1032 745 L755 875 M1032 820 L835 915" stroke="#109010" strokeWidth="1.3" vectorEffect="non-scaling-stroke" />
      <path d="M750 880 L475 1010 M830 918 L635 1012" stroke="#a81414" strokeWidth="1.3" vectorEffect="non-scaling-stroke" />
      <path d="M750 1028 L1040 1040 L1010 1060 H1042 V1033 H1015" stroke="#1010e0" strokeWidth="1.6" vectorEffect="non-scaling-stroke" />
    </g>
  </g>
);

const Viewport = () => (
  <div className="w-[1812px] mt-[15px] h-[1298px] shrink-0 bg-[#363636] border-[3px] border-[#6e5f24] relative overflow-hidden">
    <svg viewBox="563 428 1806 1292" className="w-full h-full block">
      <line x1="992" y1="428" x2="971" y2="1720" stroke="#4a4a4a" strokeWidth="1.5" />
      <line x1="560" y1="1384" x2="2372" y2="1422" stroke="#4c4c4c" strokeWidth="1.5" />
      <line x1="2017" y1="428" x2="1995" y2="1720" stroke="#0c0c0c" strokeWidth="2" />
      <Mesh />
      <text x="1480" y="1190" fontSize="28" fill="#f0e000" fontFamily="Open Sans" fontWeight="600">x</text>
      <text x="1745" y="938" fontSize="26" fill="#0f9a0f" fontFamily="Open Sans" fontWeight="700">y</text>
      <text x="1738" y="1222" fontSize="26" fill="#1010e0" fontFamily="Open Sans" fontWeight="700">z</text>
      <g>
        <circle cx="2299" cy="497" r="41" fill="none" stroke="#8c8c8c" strokeWidth="8" />
        <circle cx="2299" cy="497" r="46" fill="none" stroke="#555" strokeWidth="2" />
        <polygon points="2276,478 2322,478 2322,514 2276,514" fill="#8b8b8b" stroke="#666" />
        <polygon points="2286,488 2312,488 2316,514 2282,514" fill="#a4a4a4" />
        <text x="2293" y="454" fontSize="14" fill="#ccc" fontFamily="Open Sans">N</text>
        <text x="2293" y="552" fontSize="14" fill="#ccc" fontFamily="Open Sans">S</text>
        <text x="2248" y="502" fontSize="14" fill="#ccc" fontFamily="Open Sans">W</text>
        <text x="2344" y="502" fontSize="14" fill="#ccc" fontFamily="Open Sans">E</text>
      </g>
      <g fontFamily="Open Sans" fontSize="25">
        <line x1="572" y1="1693" x2="595" y2="1693" stroke="#c00" strokeWidth="2" />
        <line x1="593" y1="1693" x2="593" y2="1716" stroke="#0a9a0a" strokeWidth="2" />
        <text x="564" y="1696" fill="#c00000">x</text>
        <text x="593" y="1692" fill="#1414e0">z</text>
        <text x="588" y="1722" fill="#0a9a0a">y</text>
      </g>
    </svg>
    <div className="absolute left-[5px] top-[10px] flex text-[27px] leading-none text-[#d4d4d4] whitespace-nowrap">
      <span className="w-[58px]">[+ ]</span><span className="w-[210px]">[Orthographic ]</span><span className="w-[154px]">[Standard ]</span><span>[Wireframe ]</span>
    </div>
  </div>
);

const Btn = ({ c, t, dim }) => (
  <div className={"flex items-center justify-center rounded-[6px] shrink-0 text-[26.5px] leading-none whitespace-nowrap border border-[#4a4a4a] " + (dim ? "bg-[#545454] text-[#8d8d8d] " : "bg-[#616161] text-[#dcdcdc] ") + c}>{t}</div>
);
const Box = () => <div className="w-[37px] h-[42px] bg-[#5e5e5e] rounded-[6px] flex items-center justify-center shrink-0"><div className="w-[14px] h-[13px] border-2 border-[#111] border-t-[4px]" /></div>;
const Chk = ({ c = "", on }) => <div className={"w-[30px] h-[30px] bg-[#5c5c5c] border border-[#484848] shrink-0 flex items-center justify-center text-[#999] text-[24px] leading-none " + c}>{on && "✓"}</div>;
const Radio = ({ on }) => <div className="w-[30px] h-[33px] rounded-full bg-[#5c5c5c] flex items-center justify-center shrink-0">{on && <div className="w-[18px] h-[20px] rounded-full bg-[#e4e4e4]" />}</div>;
const Spin = ({ col = "#999" }) => <div className="flex flex-col gap-[6px] shrink-0"><Tri c="w-[15px] h-[12px]" down={false} col={col} /><Tri c="w-[15px] h-[12px]" col={col} /></div>;
const Grip = () => <div className="grid grid-cols-4 gap-[2px] w-[14px] ml-auto mr-[20px] shrink-0">{Array.from({ length: 12 }).map((_, i) => <div key={i} className="w-[2px] h-[2px] bg-[#a0a0a0]" />)}</div>;

const Command = () => (
  <div className="flex-1 min-w-0 flex flex-col h-full">
    <div className="h-[38px] shrink-0 flex items-center pl-[11px]"><div className="w-full h-[5px] border-y border-dotted border-[#bbb]" /></div>
    <div className="flex-1 min-h-0 flex flex-col ml-[12px] border-b-2 border-[#333] bg-[#444]">
      <div className="h-[72px] flex gap-[3px] shrink-0 bg-[#3d3d3d]">
        <Tab><Ic c="w-[42px] h-[42px]" v="0 0 42 42"><path d="M16 0 H26 V16 H42 V26 H26 V42 H16 V26 H0 V16 H16 Z" fill="#9a9a9a" /></Ic></Tab>
        <Tab on><Ic c="w-[46px] h-[44px]" v="0 0 46 44"><g fill="none" stroke={T} strokeWidth="2.5"><rect x="1" y="1" width="8" height="8" /><rect x="36" y="1" width="8" height="8" /><rect x="1" y="34" width="8" height="8" /><rect x="36" y="34" width="8" height="8" /><path d="M9 5 H36 M5 9 V34 M40 9 V34 M9 38 H36" strokeWidth="4" /></g><path d="M10 34 Q18 12 36 10" stroke="#ccc" strokeWidth="2.5" fill="none" /></Ic></Tab>
        <Tab><Ic c="w-[38px] h-[40px]" v="0 0 38 40"><rect x="4" y="0" width="30" height="10" fill="#9a9a9a" /><path d="M19 10 V20 M7 28 V20 H31 V28" fill="none" stroke="#3f8a87" strokeWidth="2.5" /><rect x="0" y="28" width="12" height="12" fill="#3f8a87" /><rect x="26" y="28" width="12" height="12" fill="#3f8a87" /></Ic></Tab>
        <Tab><Ic c="w-[50px] h-[36px]" v="0 0 50 36"><ellipse cx="31" cy="18" rx="18" ry="18" fill="#9a9a9a" /><path d="M18 2 Q2 8 2 18 Q2 28 18 34 M23 1 Q9 8 9 18 Q9 28 23 35" fill="none" stroke="#3f8a87" strokeWidth="2.5" /></Ic></Tab>
        <Tab><Ic c="w-[42px] h-[38px]" v="0 0 42 38"><rect x="0" y="0" width="42" height="25" fill="#9a9a9a" /><rect x="15" y="29" width="12" height="3" fill="#9a9a9a" /><rect x="10" y="34" width="22" height="3" fill="#9a9a9a" /></Ic></Tab>
        <Tab><Ic c="w-[42px] h-[42px]" v="0 0 42 42"><path d="M10 1 Q0 3 2 12 L8 8 L12 12 L8 18 Q14 20 18 14 L38 40 L42 36 L20 10 Q18 0 10 1Z" fill="#9a9a9a" /></Ic></Tab>
      </div>
      <div className="flex-1 min-h-0 flex">
        <div className="w-[489px] shrink-0 flex flex-col h-full overflow-hidden pb-[5px]">
          <div className="flex mt-[16px] ml-[10px] shrink-0">
            <div className="w-[418px] h-[49px] bg-[#626262] border border-[#555] flex items-center pl-[6px] text-[26.5px] leading-none text-[#d8d8d8] whitespace-nowrap overflow-hidden">parte sopra va bene senza intagli</div>
            <div className="ml-[14px] w-[42px] h-[49px] flex flex-col"><div className="h-[24px] bg-black" /><div className="h-[25px] bg-white" /></div>
          </div>
          <div className="mt-[24px] ml-[10px] w-[474px] h-[41px] bg-[#666] flex items-center justify-between pl-[5px] pr-[6px] shrink-0">
            <span className="text-[28px] leading-none text-[#ddd]">Modifier List</span><Tri c="w-[20px] h-[14px]" />
          </div>
          <div className="mt-[38px] ml-[12px] grid grid-cols-[232px_233px] gap-x-[7px] gap-y-[10px] shrink-0">
            <Btn c="h-[48px]" t="Mesh Select" /><Btn c="h-[48px]" t="Patch Select" />
            <Btn c="h-[48px]" t="SplineSelect" dim /><Btn c="h-[48px]" t="Poly Select" />
            <Btn c="h-[48px]" t="Vol. Select" /><Btn c="h-[48px]" t="FFD Select" dim />
            <Btn c="h-[48px]" t="Surface Select" dim />
          </div>
          <div className="mt-[12px] ml-[9px] w-[477px] h-[165px] border-2 border-[#e6e6e6] shrink-0 pt-[3px]">
            <div className="flex h-[42px] border-b border-[#5d5d5d]">
              <div className="w-[48px] flex items-center justify-center shrink-0"><RA c="w-[14px] h-[20px]" /></div>
              <div className="flex-1 border border-[#5b80b3] flex items-center pl-[3px] text-[26.5px] leading-none text-[#f0f0f0] pr-[8px]">Editable Poly<div className="ml-auto w-[31px] h-[31px] bg-[#cdcdcd]" /></div>
            </div>
          </div>
          <div className="h-[86px] flex items-center ml-[14px] shrink-0 pb-[4px]">
            <Ic c="w-[36px] h-[26px]" v="0 0 36 26"><path d="M16 2 L36 12 L24 20 L12 16Z" fill="#ccc" /><path d="M14 16 L1 26" stroke="#ccc" strokeWidth="2" /></Ic>
            <div className="w-[2px] h-[22px] bg-[#1a1a1a] ml-[20px] shrink-0" />
            <Ic c="w-[16px] h-[38px] ml-[30px]" v="0 0 16 38"><path d="M2 1 V34 H14 V1 M0 1 H16" fill="none" stroke="#bbb" strokeWidth="2" /><rect x="3" y="19" width="10" height="15" fill={T} /></Ic>
            <div className="w-[2px] h-[22px] bg-[#1a1a1a] ml-[32px] shrink-0" />
            <Ic c="w-[40px] h-[38px] ml-[18px]" v="0 0 40 38"><g fill="#555" stroke="#2c2c2c" strokeWidth="2"><ellipse cx="10" cy="10" rx="9" ry="9" /><path d="M18 12 H34 V24" fill="none" /><ellipse cx="20" cy="28" rx="11" ry="9" /></g></Ic>
            <Ic c="w-[38px] h-[46px] ml-[22px]" v="0 0 38 46"><rect x="4" y="10" width="30" height="35" rx="3" fill="#555" stroke="#2c2c2c" strokeWidth="2" /><path d="M0 8 H38 M12 7 V2 H26 V7" fill="none" stroke="#5e5e5e" strokeWidth="3" /><path d="M12 16 V40 M19 16 V40 M26 16 V40" stroke="#222" strokeWidth="5" /></Ic>
            <div className="w-[2px] h-[22px] bg-[#1a1a1a] ml-[21px] shrink-0" />
            <Ic c="w-[40px] h-[34px] ml-[18px]" v="0 0 40 34"><rect x="0" y="4" width="29" height="30" fill="#ccc" /><g fill="#555"><rect x="3" y="10" width="10" height="8" /><rect x="16" y="10" width="10" height="8" /><rect x="3" y="22" width="10" height="8" /><rect x="16" y="22" width="10" height="8" /></g><path d="M16 20 L36 4 L40 8 L20 24 L14 25Z" fill={O} /></Ic>
          </div>
          <div className="flex items-center ml-[12px] w-[452px] h-[26px] shrink-0 mt-[-1px]">
            <div className="flex-1 h-[3px] bg-[#5a5a5a]" /><div className="w-[34px] mx-[8px] h-[6px] border-y border-dotted border-[#ccc]" /><div className="flex-1 h-[3px] bg-[#5a5a5a]" />
          </div>
          <div className="flex flex-1 min-h-0 ml-[9px] mt-[3px]">
            <div className="w-[457px] shrink-0 bg-[#505050] rounded-t-[8px] border border-[#3f3f3f] overflow-hidden h-full">
              <div className="h-[52px] flex items-center pl-[14px]"><Tri c="w-[18px] h-[15px]" col="#aaa" /><span className="ml-[17px] font-bold text-[27.5px] leading-none text-[#f2f2f2]">Selection</span><Grip /></div>
              <div className="h-[56px] flex items-center mt-[8px] pl-[72px]">
                <Ic c="w-[36px] h-[40px]" v="0 0 36 40"><path d="M31 0 V10 M26 5 H36 M3 14 V24 M-1 19 H8 M24 28 V38 M19 33 H29" stroke={T} strokeWidth="2.5" /></Ic>
                <Ic c="w-[32px] h-[44px] ml-[26px]" v="0 0 32 44"><polygon points="30,2 2,24 28,42" fill="none" stroke={T} strokeWidth="3" /></Ic>
                <Ic c="w-[32px] h-[44px] ml-[27px]" v="0 0 32 44"><path d="M6 2 Q30 8 28 24 Q26 40 8 42 Q0 38 10 28 Q14 16 6 10 Q2 4 6 2Z" fill="none" stroke={T} strokeWidth="3" /></Ic>
                <div className="w-[56px] h-[56px] bg-[#5d87c0] rounded-[6px] ml-[14px] flex items-center justify-center shrink-0"><div className="w-[33px] h-[33px] bg-[#41bdb8] border border-[#222]" /></div>
                <Ic c="w-[38px] h-[44px] ml-[13px]" v="0 0 38 44"><polygon points="19,0 38,10 38,34 19,44 0,34 0,10" fill={T} /><path d="M0 10 L19 20 L38 10 M19 20 V44" stroke="#3a3a3a" strokeWidth="1.5" fill="none" /></Ic>
              </div>
              <div className="flex items-center ml-[38px] mt-[18px] h-[30px]"><Chk /><span className="ml-[8px] text-[26.5px] leading-none text-[#e0e0e0]">By Vertex</span></div>
              <div className="flex items-center ml-[38px] mt-[20px] h-[30px]"><Chk /><span className="ml-[8px] text-[26.5px] leading-none text-[#e0e0e0]">Ignore Backfacing</span></div>
              <div className="flex items-center ml-[38px] mt-[15px] h-[39px]"><Chk /><span className="ml-[8px] text-[26.5px] leading-none text-[#e0e0e0] w-[136px] whitespace-nowrap">By Angle:</span>
                <div className="w-[211px] h-[39px] bg-[#565656] flex items-center justify-between pl-[6px] pr-[8px] text-[26.5px] leading-none text-[#888]">45,0<Spin col="#8c8c8c" /></div>
              </div>
              <div className="flex ml-[36px] mt-[11px] gap-[18px]"><Btn c="w-[186px] h-[42px]" t="Shrink" /><Btn c="w-[186px] h-[42px]" t="Grow" /></div>
              <div className="flex ml-[36px] mt-[12px]">
                <Btn c="w-[147px] h-[42px]" t="Ring" dim /><div className="w-[30px] h-[42px] ml-[9px] bg-[#565656] flex items-center justify-center rounded-[2px]"><Spin col="#9a9a9a" /></div>
                <Btn c="w-[151px] h-[42px] ml-[18px]" t="Loop" dim /><div className="w-[30px] h-[42px] ml-[6px] bg-[#565656] flex items-center justify-center rounded-[2px]"><Spin col="#9a9a9a" /></div>
              </div>
              <div className="relative ml-[15px] mt-[31px] w-[416px] h-[82px] border-2 border-[#383838] rounded-[4px] flex items-center pt-[10px] pl-[4px]">
                <div className="absolute left-[11px] top-[-16px] bg-[#505050] px-[2px] text-[27px] leading-none text-[#e0e0e0] whitespace-nowrap">Preview Selection</div>
                <Radio on /><span className="ml-[16px] w-[83px] text-[26.5px] leading-none text-[#e0e0e0]">Off</span>
                <Radio /><span className="ml-[16px] w-[116px] text-[26.5px] leading-none text-[#e0e0e0] whitespace-nowrap">SubObj</span>
                <Radio /><span className="ml-[16px] text-[26.5px] leading-none text-[#e0e0e0]">Multi</span>
              </div>
              <div className="mt-[17px] pl-[139px] text-[26.5px] leading-none text-[#e0e0e0] font-bold whitespace-nowrap">178 Polygons Selected</div>
            </div>
            <div className="w-[13px] ml-[7px] shrink-0 h-[438px] bg-[#565656] rounded-full border border-[#3c3c3c]" />
          </div>
        </div>
        <div className="w-[457px] shrink-0 flex flex-col h-full overflow-hidden pt-[7px] pb-[5px]">
          <div className="h-[49px] bg-[#555] rounded-[6px] flex items-center pl-[18px] shrink-0"><RA c="w-[14px] h-[18px]" col="#aaa" /><span className="ml-[19px] font-bold text-[27.5px] leading-none text-[#f2f2f2]">Paint Deformation</span><Grip /></div>
          <div className="h-[540px] bg-[#505050] rounded-[6px] mt-[11px] shrink-0 flex flex-col">
            <div className="h-[48px] flex items-center pl-[16px] shrink-0"><Tri c="w-[18px] h-[14px]" col="#aaa" /><span className="ml-[17px] font-bold text-[27.5px] leading-none text-[#f2f2f2]">Edit Polygons</span><Grip /></div>
            <div className="ml-[33px] mt-[22px] flex flex-col gap-[15.5px] w-[387px]">
              <Btn c="w-full h-[42px]" t="Insert Vertex" />
              <div className="flex gap-[2px]"><Btn c="w-[147px] h-[42px]" t="Extrude" /><Box /><div className="w-[14px]" /><Btn c="w-[148px] h-[42px]" t="Outline" /><Box /></div>
              <div className="flex gap-[2px]"><Btn c="w-[147px] h-[42px]" t="Bevel" /><Box /><div className="w-[14px]" /><Btn c="w-[148px] h-[42px]" t="Inset" /><Box /></div>
              <div className="flex gap-[2px]"><Btn c="w-[147px] h-[42px]" t="Bridge" /><Box /><div className="w-[14px]" /><Btn c="w-[187px] h-[42px]" t="Flip" /></div>
              <div className="flex gap-[2px]"><Btn c="w-[348px] h-[42px]" t="Hinge From Edge" /><Box /></div>
              <div className="flex gap-[2px]"><Btn c="w-[348px] h-[42px]" t="Extrude Along Spline" /><Box /></div>
              <Btn c="w-full h-[42px]" t="Edit Triangulation" />
              <div className="flex"><Btn c="w-[186px] h-[42px]" t="Retriangulate" /><div className="w-[14px]" /><Btn c="w-[187px] h-[42px]" t="Turn" /></div>
            </div>
          </div>
          <div className="flex-1 bg-[#505050] rounded-t-[6px] mt-[9px] overflow-hidden">
            <div className="h-[48px] flex items-center pl-[16px]"><Tri c="w-[18px] h-[14px]" col="#aaa" /><span className="ml-[17px] font-bold text-[27.5px] leading-none text-[#f2f2f2] whitespace-nowrap">Subdivision Displacement</span><Grip /></div>
            <div className="flex items-center ml-[35px] mt-[19px] h-[30px]"><Chk /><span className="ml-[8px] text-[26.5px] leading-none text-[#e0e0e0]">Subdivision Displacement</span></div>
            <div className="flex items-center ml-[95px] mt-[20px] h-[30px]"><Chk on /><span className="ml-[8px] text-[26.5px] leading-none text-[#8f8f8f]">Split Mesh</span></div>
            <div className="relative ml-[29px] mt-[36px] w-[400px] h-[88px] border-2 border-[#3c3c3c] rounded-[4px] flex gap-[11px] pl-[13px] pt-[27px]">
              <div className="absolute left-[12px] top-[-16px] bg-[#505050] px-[2px] text-[26px] leading-none text-[#8f8f8f] whitespace-nowrap">Subdivision Presets</div>
              <Btn c="w-[116px] h-[38px]" t="Low" dim /><Btn c="w-[116px] h-[38px]" t="Medium" dim /><Btn c="w-[115px] h-[38px]" t="High" dim />
            </div>
            <div className="relative ml-[29px] mt-[26px] w-[395px] h-[320px] border-2 border-[#3c3c3c] rounded-[4px] pl-[22px] text-[26px] leading-none text-[#8f8f8f]">
              <div className="absolute left-[12px] top-[-16px] bg-[#505050] px-[2px] whitespace-nowrap">Subdivision Method</div>
              <div className="flex items-center h-[33px] mt-[29px]"><Radio /><span className="ml-[18px]">Regular</span></div>
              <div className="flex items-center h-[39px] mt-[10px] pl-[49px]"><span className="w-[127px]">Steps:</span><div className="w-[176px] h-[39px] bg-[#565656] flex items-center justify-between pl-[6px] pr-[8px]">2<Spin col="#9a9a9a" /></div></div>
              <div className="flex items-center h-[33px] mt-[16px]"><Radio /><span className="ml-[18px]">Spatial</span></div>
              <div className="flex items-center h-[33px] mt-[12px]"><Radio /><span className="ml-[18px]">Curvature</span></div>
              <div className="flex items-center h-[33px] mt-[11px]"><div className="w-[30px] h-[33px] rounded-full bg-[#5c5c5c] flex items-center justify-center shrink-0"><div className="w-[18px] h-[20px] rounded-full bg-[#a8a8a8]" /></div><span className="ml-[18px] whitespace-nowrap">Spatial and Curvature</span></div>
              <div className="flex items-center h-[39px] mt-[10px] pl-[49px]"><span className="w-[127px]">Edge:</span><div className="w-[176px] h-[39px] bg-[#565656] flex items-center justify-between pl-[6px] pr-[8px]">20,0<Spin col="#9a9a9a" /></div></div>
            </div>
          </div>
        </div>
        <div className="w-[14px] ml-[8px] shrink-0 pt-[7px] pb-[5px] h-full"><div className="h-full bg-[#3d3d3d] rounded-full pt-[1px]"><div className="w-full h-[274px] rounded-full bg-[#565656]" /></div></div>
      </div>
    </div>
  </div>
);
const Tab = ({ children, on }) => (
  <div className={"w-[81px] h-full rounded-t-[10px] flex items-center justify-center shrink-0 " + (on ? "bg-[#444]" : "bg-[#383838]")}>{children}</div>
);

const Main = () => (
  <div className="flex h-[1313px] shrink-0">
    <div className="w-[560px] flex flex-col shrink-0 h-full">
      <div className="h-[37px] shrink-0 flex items-center">
        <div className="ml-[8px] w-[88px] h-[5px] border-y border-dotted border-[#bbb]" />
        <div className="ml-[24px] w-[423px] h-[5px] border-y border-dotted border-[#bbb]" />
      </div>
      <div className="flex h-[1276px]">
        <div className="w-[105px] shrink-0 h-full bg-linear-to-r from-[#303030] to-[#2a2a2a] flex flex-col overflow-hidden">
          <div className="h-[960px] shrink-0" />
          <div className="w-[52px] h-[51px] ml-[25px] rounded-[6px] border border-[#222] bg-[#3c3c3c] flex items-center justify-center shrink-0"><RA c="w-[14px] h-[24px]" /></div>
          <div className="mt-[27px] ml-[10px] w-[110px] h-[115px] rounded-[10px] bg-linear-to-b from-[#4f6174] to-[#3a80d8] pt-[20px] pl-[8px] shrink-0"><div className="w-[80px] h-[71px] bg-linear-to-b from-[#565e68] to-[#68727e] border-2 border-[#222] rounded-[2px]" /></div>
          <div className="mt-[3px] ml-[10px] w-[110px] h-[114px] rounded-[10px] bg-[#515151] pt-[20px] pl-[8px] shrink-0"><div className="w-[80px] h-[71px] bg-[#5e5e5e] border-2 border-[#222] rounded-[2px]" /></div>
        </div>
        <Explorer />
      </div>
    </div>
    <Viewport />
    <Command />
  </div>
);

const Track = () => {
  const ticks = Array.from({ length: 101 }, (_, i) => i);
  return (
    <div className="h-[63px] shrink-0 flex border-t-[2px] border-[#191919] ml-[22px]">
      <div className="w-[132px] shrink-0 flex items-center pl-[36px] pt-[10px]">
        <Ic c="w-[38px] h-[36px]" v="0 0 38 36"><path d="M0 3 H7 M0 11 H7 M0 19 H7 M0 27 H7 M0 34 H7" stroke="#ddd" strokeWidth="3" /><path d="M12 22 Q18 -6 24 14 T36 26" fill="none" stroke={T} strokeWidth="2.5" /></Ic>
      </div>
      <div className="w-[3071px] shrink-0 bg-[#2b2b2b] flex relative">
        <div className="absolute left-[3051px] top-0 w-[22px] h-full bg-[#6c6410] border border-[#222]" />
        {ticks.map(i => (
          <div key={i} className="w-[30.46px] h-full shrink-0 relative">
            <div className="absolute left-[14.5px] top-0 w-[1px] h-[29px] bg-[#5d5d5d]" />
            {i % 5 === 0 && <div className="absolute left-[14.5px] bottom-0 w-[1px] h-[10px] bg-[#5d5d5d]" />}
            {i % 5 === 0 && <div className="absolute left-[-15px] w-[60px] top-[31px] h-[22px] flex items-center justify-center text-[25px] leading-none text-[#c8c8c8]">{i}</div>}
          </div>
        ))}
      </div>
    </div>
  );
};

const Status = () => (
  <div className="h-[140px] shrink-0 flex pt-[8px]">
    <div className="w-[260px] ml-[5px] mr-[5px] shrink-0 h-[125px] flex flex-col">
      <div className="h-[63px] bg-[#dcc6c6] border-y-2 border-[#888] border-b-[#aaa]" />
      <div className="h-[62px] bg-white border-t-2 border-[#888] border-b-2 border-b-[#bbb] flex items-start overflow-hidden pl-[5px] pt-[5px] font-['Liberation_Mono',monospace] text-[31px] leading-none text-[#8a8a8a] whitespace-nowrap">MAXScript Mini</div>
    </div>
    <div className="w-[2px] h-[132px] bg-[#222] shrink-0" />
    <div className="w-[1917px] shrink-0 flex flex-col">
      <div className="h-[62px] flex items-center pl-[7px]">
        <span className="w-[753px] text-[27px] leading-none text-[#f0f0f0] whitespace-nowrap shrink-0">1 Object Selected</span>
        <div className="w-[57px] h-[55px] rounded-[6px] bg-[#5d87c0] flex items-center justify-center shrink-0"><Ic c="w-[42px] h-[42px]" v="0 0 42 42"><path d="M1 10 V1 H10 M32 1 H41 V10 M1 32 V41 H10 M32 41 H41 V32" fill="none" stroke="#ddd" strokeWidth="3" /><rect x="12" y="10" width="18" height="22" fill={T} stroke="#222" /></Ic></div>
        <Ic c="w-[26px] h-[36px] ml-[29px]" v="0 0 26 36"><path d="M5 16 V8 Q5 1 13 1 Q21 1 21 8 V16" fill="none" stroke="#ccc" strokeWidth="2.5" /><rect x="1" y="15" width="24" height="21" rx="2" fill="#ccc" /><rect x="11" y="20" width="4" height="10" fill="#333" /></Ic>
        <Ic c="w-[32px] h-[32px] ml-[40px]" v="0 0 32 32"><rect x="1" y="1" width="30" height="30" fill="none" stroke="#ccc" strokeWidth="2" /><path d="M16 1 V31 M1 16 H31" stroke="#ccc" strokeWidth="1.5" /><circle cx="16" cy="16" r="6" fill="#444" stroke="#ccc" strokeWidth="2.5" /></Ic>
        <Coord l="X:" v="9,463" c="ml-[28px]" />
        <Coord l="Y:" v="12,93" c="ml-[35px]" />
        <Coord l="Z:" v="0,0" c="ml-[35px]" />
        <span className="ml-[38px] text-[27.5px] leading-none text-[#f0f0f0] whitespace-nowrap">Grid = 10,0</span>
      </div>
      <div className="h-[62px] flex items-center ml-[1568px] mt-[3px]">
        <div className="w-[57px] h-[55px] rounded-[6px] bg-[#5d87c0] flex items-center justify-center shrink-0 border-l-2 border-l-[#222]"><Ic c="w-[32px] h-[40px]" v="0 0 32 40"><polygon points="16,2 30,10 30,30 16,38 2,30 2,10" fill="none" stroke="#ddd" strokeWidth="3" /><path d="M2 12 L16 20 L30 12 M16 20 V38" fill="none" stroke="#ddd" strokeWidth="3" /></Ic></div>
        <span className="ml-[13px] text-[27px] leading-none text-[#ddd] whitespace-nowrap">Add Time Tag</span>
      </div>
    </div>
    <div className="w-[333px] shrink-0 flex flex-col pt-[2px]">
      <div className="h-[54px] flex items-center">
        <Ic c="w-[37px] h-[30px] ml-[7px]" v="0 0 37 30"><path d="M1 0 V30" stroke="#ddd" strokeWidth="4" /><polygon points="20,2 8,15 20,28" fill="#ccc" /><polygon points="36,2 24,15 36,28" fill="#ccc" /></Ic>
        <Ic c="w-[36px] h-[34px] ml-[32px]" v="0 0 36 34"><polygon points="14,3 1,17 14,31" fill="#ccc" /><rect x="18" y="2" width="6" height="30" fill="#ccc" /><rect x="27" y="2" width="6" height="30" fill="#ccc" /></Ic>
        <Ic c="w-[32px] h-[56px] ml-[25px]" v="0 0 32 56"><polygon points="1,2 31,28 1,54" fill="#ccc" /></Ic>
        <Ic c="w-[34px] h-[34px] ml-[27px]" v="0 0 34 34"><rect x="1" y="2" width="6" height="30" fill="#ccc" /><rect x="10" y="2" width="6" height="30" fill="#ccc" /><polygon points="20,3 33,17 20,31" fill="#ccc" /></Ic>
        <Ic c="w-[38px] h-[30px] ml-[34px]" v="0 0 38 30"><polygon points="1,2 13,15 1,28" fill="#ccc" /><polygon points="17,2 29,15 17,28" fill="#ccc" /><rect x="33" y="0" width="4" height="30" fill="#ddd" /></Ic>
      </div>
      <div className="h-[66px] flex items-center">
        <Ic c="w-[34px] h-[30px] ml-[9px]" v="0 0 34 30"><polygon points="15,2 1,15 15,28" fill="#ccc" /><polygon points="19,2 33,15 19,28" fill="#ccc" /></Ic>
        <div className="ml-[20px] w-[182px] h-[44px] bg-[#666] flex items-center justify-between pl-[8px] pr-[14px] text-[26.5px] leading-none text-[#e0e0e0]">100<Spin col="#ccc" /></div>
        <Ic c="w-[40px] h-[46px] ml-[20px]" v="0 0 40 46"><ellipse cx="13" cy="16" rx="13" ry="16" fill="#ccc" /><path d="M13 5 V17 H22" stroke="#444" strokeWidth="3" fill="none" /><circle cx="28" cy="32" r="8" fill="none" stroke={O} strokeWidth="6" /><circle cx="28" cy="32" r="12" fill="none" stroke={O} strokeWidth="3" strokeDasharray="3 3" /></Ic>
      </div>
    </div>
    <div className="w-[113px] h-[120px] mt-[2px] bg-[#5b5b5b] rounded-[8px] flex items-center justify-center shrink-0">
      <Ic c="w-[74px] h-[88px]" v="0 0 74 88"><path d="M26 0 H40 V28 H64 V44 H40 V80 H26 V44 H2 V28 H26 Z" fill={G} stroke="#333" strokeWidth="1.5" /><path d="M36 64 L64 26 M60 32 L68 40 M54 40 L62 46" stroke={T} strokeWidth="6" fill="none" /><ellipse cx="32" cy="72" rx="8" ry="10" fill="none" stroke={T} strokeWidth="5" /></Ic>
    </div>
    <div className="flex flex-col ml-[7px] gap-[3px] mt-[2px] shrink-0">
      <Btn c="w-[123px] h-[55px]" t="Auto" />
      <Btn c="w-[123px] h-[54px]" t="Set K." />
    </div>
    <div className="flex flex-col ml-[7px] w-[299px] mt-[2px] shrink-0">
      <div className="h-[41px] bg-[#666] flex items-center justify-between pl-[16px] pr-[14px] text-[26.5px] leading-none text-[#ddd]">Selected<Tri /></div>
      <div className="flex items-center mt-[18px] pl-[10px]">
        <Ic c="w-[38px] h-[50px]" v="0 0 38 50"><path d="M2 48 Q12 40 12 8 H26 Q26 40 36 48" fill="none" stroke={T} strokeWidth="3" /><path d="M0 6 H38" stroke="#ccc" strokeWidth="2" strokeDasharray="4 3" /><rect x="15" y="1" width="8" height="9" fill="#444" stroke={T} strokeWidth="2" /><Fly x={38} y={58} /></Ic>
        <Btn c="w-[234px] h-[55px] ml-[16px]" t="Filters..." />
      </div>
    </div>
    <div className="flex-1 min-w-0 mt-[4px] ml-[22px] grid grid-cols-[60px_60px_60px_60px] grid-rows-[58px_58px] shrink-0 items-center justify-items-center gap-x-[1px]">
      <Ic c="w-[42px] h-[48px]" v="0 0 42 48"><ellipse cx="24" cy="18" rx="15" ry="16" fill="none" stroke="#ccc" strokeWidth="4" /><path d="M14 32 L3 47" stroke="#ccc" strokeWidth="5" /></Ic>
      <Ic c="w-[40px] h-[48px]" v="0 0 40 48"><rect x="10" y="0" width="14" height="18" fill={T} /><rect x="26" y="0" width="14" height="18" fill={T} /><rect x="26" y="20" width="14" height="14" fill={T} /><circle cx="15" cy="30" r="7" fill="none" stroke="#ccc" strokeWidth="3" /><path d="M10 36 L2 47" stroke="#ccc" strokeWidth="3" /></Ic>
      <Ic c="w-[42px] h-[48px]" v="0 0 42 48"><path d="M1 9 V1 H9 M33 1 H41 V9 M1 39 V47 H9 M33 47 H41 V39" fill="none" stroke="#ccc" strokeWidth="2.5" /><polygon points="21,8 34,15 34,32 21,40 8,32 8,15" fill={T} /><path d="M8 15 L21 23 L34 15 M21 23 V40" stroke="#444" strokeWidth="1.5" fill="none" /><Fly x={42} y={56} /></Ic>
      <Ic c="w-[40px] h-[48px]" v="0 0 40 48"><polygon points="28,0 38,7 38,30 28,36 20,30 20,7" fill={T} /><g fill="#ccc"><polygon points="12,20 19,28 12,36 5,28" /><polygon points="22,32 28,40 20,48 14,40" /></g><Fly x={40} y={56} /></Ic>
      <Ic c="w-[38px] h-[48px]" v="0 0 38 48"><rect x="1" y="1" width="36" height="28" fill="none" stroke="#ccc" strokeWidth="3" strokeDasharray="6 3" /><circle cx="15" cy="30" r="6" fill="none" stroke={T} strokeWidth="3" /><path d="M10 36 L3 47" stroke={T} strokeWidth="3" /></Ic>
      <Ic c="w-[30px] h-[46px]" v="0 0 30 46"><path d="M4 18 V8 M10 18 V3 M16 18 V3 M22 18 V8" stroke="#ccc" strokeWidth="4.5" strokeLinecap="round" /><path d="M2 18 H25 V34 Q25 46 14 46 Q4 46 2 32 Z" fill="#ccc" /><Fly x={34} y={52} /></Ic>
      <Ic c="w-[42px] h-[48px]" v="0 0 42 48"><path d="M21 6 A16 18 0 0 0 10 32 L21 24 Z" fill="#ccc" /><path d="M21 6 A16 18 0 0 1 34 28 L21 24 Z" fill={T} /><path d="M2 42 Q0 36 14 28 Q32 16 40 6" fill="none" stroke="#ccc" strokeWidth="3" /><ellipse cx="20" cy="30" rx="15" ry="11" fill="none" stroke="#ccc" strokeWidth="2" /><Fly x={40} y={56} /></Ic>
      <Ic c="w-[36px] h-[48px]" v="0 0 36 48"><rect x="0" y="0" width="36" height="48" fill="#ccc" stroke="#333" /><rect x="2" y="22" width="20" height="24" fill="#404040" /><path d="M14 20 L30 6 M20 5 H31 V16" fill="none" stroke="#404040" strokeWidth="3.5" /></Ic>
    </div>
  </div>
);
const Coord = ({ l, v, c }) => (
  <div className={"flex items-center shrink-0 " + c}>
    <span className="w-[32px] text-[26.5px] leading-none text-[#f0f0f0]">{l}</span>
    <div className="w-[153px] h-[47px] bg-[#5b5b5b] flex items-center pl-[6px] text-[26.5px] leading-none text-[#8c8c8c]">{v}</div>
  </div>
);

const Taskbar = () => (
  <div className="h-[105px] shrink-0 bg-[#020a0e] flex items-stretch">
    <div className="w-[126px] flex items-center justify-center shrink-0">
      <Ic c="w-[42px] h-[44px]" v="0 0 42 44"><polygon points="0,6 19,3 19,21 0,21" fill="#fff" /><polygon points="21,3 42,0 42,21 21,21" fill="#fff" /><polygon points="0,23 19,23 19,41 0,38" fill="#fff" /><polygon points="21,23 42,23 42,44 21,41" fill="#fff" /></Ic>
    </div>
    <div className="w-[903px] bg-[#333] flex items-center shrink-0 pl-[24px]">
      <div className="w-[56px] h-[58px] rounded-full border-[7px] border-[#c8c8c8] shrink-0" />
      <span className="ml-[26px] text-[35.5px] leading-none text-[#a9a9a9] whitespace-nowrap">Scrivi qui per eseguire la ricerca</span>
    </div>
    <div className="w-[110px] flex items-center justify-center shrink-0 pl-[18px]">
      <Ic c="w-[52px] h-[38px]" v="0 0 52 38"><rect x="11" y="1" width="30" height="36" fill="none" stroke="#fff" strokeWidth="2.5" /><path d="M8 5 H2 V33 H8 M44 5 H50 V33 H44" fill="none" stroke="#fff" strokeWidth="2.5" /></Ic>
    </div>
    <div className="w-[128px] flex items-center justify-center shrink-0 ml-[23px]">
      <Ic c="w-[54px] h-[58px]" v="0 0 54 58">
        <path d="M2 30 Q6 2 30 1 Q53 2 53 32 H18 Q20 44 32 44 Q42 44 50 38 V52 Q42 57 30 57 Q12 55 11 36 Q10 26 18 16 Q8 20 2 30 Z M18 24 H38 Q36 12 27 12 Q20 14 18 24 Z" fill="#0d72cf" fillRule="evenodd" />
      </Ic>
    </div>
    <div className="w-[129px] flex items-center justify-center shrink-0">
      <Ic c="w-[56px] h-[46px]" v="0 0 56 46"><path d="M0 3 Q0 0 4 0 H18 L23 5 H54 Q56 5 56 8 V44 Q56 46 54 46 H2 Q0 46 0 44 Z" fill="#fbe38e" /><rect x="3" y="5" width="20" height="5" fill="#fff" opacity=".8" /><path d="M19 46 V24 H45 V46 H35 V33 H27 V46 Z" fill="#3bb3f0" /></Ic>
    </div>
    <div className="w-[128px] flex items-center justify-center shrink-0">
      <Ic c="w-[54px] h-[64px]" v="0 0 54 64"><path d="M16 14 V8 Q18 1 26 1 Q32 2 36 12" fill="none" stroke="#fff" strokeWidth="2" /><polygon points="0,14 54,9 54,64 0,56" fill="#fff" /><g fill="#020a0e"><polygon points="10,26 25,24 25,36 10,37" /><polygon points="27,24 44,22 44,35 27,36" /><polygon points="10,39 25,38 25,50 10,49" /><polygon points="27,38 44,37 44,52 27,50" /></g></Ic>
    </div>
    <div className="w-[128px] flex items-center justify-center shrink-0">
      <Ic c="w-[58px] h-[62px]" v="0 0 58 62">
        <circle cx="29" cy="31" r="29" fill="#fbc02d" />
        <path d="M29 31 L4 17 A29 31 0 0 1 54 17 Z" fill="#d94a3c" />
        <path d="M29 31 L4 16 A29 31 0 0 0 18 60 Z" fill="#3f9c45" />
        <circle cx="29" cy="31" r="15" fill="#fff" /><circle cx="29" cy="31" r="12" fill="#4f8ef0" />
      </Ic>
    </div>
    <div className="w-[128px] flex items-center justify-center shrink-0">
      <Ic c="w-[64px] h-[52px]" v="0 0 64 52"><polygon points="0,18 32,0 64,18 64,52 0,52" fill="#fff" /><polygon points="32,20 50,14 40,34 62,50 34,30" fill="#020a0e" /><path d="M0 18 L30 38" stroke="#020a0e" strokeWidth="1.5" /></Ic>
    </div>
    <div className="w-[126px] ml-[3px] shrink-0 bg-[#33393c] flex flex-col items-center border-b-[5px] border-[#76b9ed] pt-[21px]">
      <div className="w-[62px] h-[63px] bg-linear-to-b from-[#cfe7e6] to-[#edf5f5] flex flex-col items-center relative shrink-0">
        <span className="text-[46px] leading-none font-bold text-[#1e97a5]">3</span>
        <span className="absolute right-[3px] bottom-[2px] text-[13px] leading-none font-bold text-[#1e97a5]">MAX</span>
      </div>
    </div>
    <div className="w-[105px] ml-[13px] shrink-0 flex items-center justify-center border-b-[5px] border-[#76b9ed]">
      <Ic c="w-[60px] h-[64px]" v="0 0 60 64"><ellipse cx="30" cy="32" rx="30" ry="32" fill="#7b2f96" /><ellipse cx="30" cy="32" rx="26" ry="28" fill="#9a3ab4" /><path d="M14 14 L22 18 Q30 16 38 18 L46 14 L47 26 Q50 36 42 42 Q38 44 36 44 V58 H24 V52 Q16 54 12 46 Q16 48 24 48 V44 Q10 42 13 26 Z" fill="#fff" /></Ic>
    </div>
    <div className="flex-1" />
    <div className="w-[60px] flex items-center justify-center shrink-0"><Ic c="w-[34px] h-[24px]" v="0 0 34 24"><path d="M1 24 L17 1 L33 24" fill="none" stroke="#fff" strokeWidth="2.5" /></Ic></div>
    <div className="w-[64px] flex items-center justify-center shrink-0"><Ic c="w-[42px] h-[44px]" v="0 0 42 44"><path d="M6 0 V10 M14 0 V10 M0 10 H20 V18 Q20 26 12 26 V38" stroke="#fff" strokeWidth="2.5" fill="#020a0e" /><rect x="14" y="10" width="26" height="28" fill="none" stroke="#fff" strokeWidth="2.5" /><rect x="18" y="16" width="18" height="17" fill="#fff" /><path d="M4 10 V22 Q6 28 14 28" fill="#fff" /></Ic></div>
    <div className="w-[64px] flex items-center justify-center shrink-0"><Ic c="w-[42px] h-[46px]" v="0 0 42 46"><rect x="1" y="1" width="40" height="30" fill="none" stroke="#fff" strokeWidth="2.5" /><rect x="1" y="1" width="8" height="30" fill="none" stroke="#fff" strokeWidth="2.5" /><path d="M18 31 V44 M6 44 H30" stroke="#fff" strokeWidth="2.5" /></Ic></div>
    <div className="w-[64px] flex items-center justify-center shrink-0"><Ic c="w-[40px] h-[46px]" v="0 0 40 46"><path d="M1 16 H8 L18 6 V40 L8 30 H1Z" fill="none" stroke="#fff" strokeWidth="2.5" /><path d="M22 16 Q26 23 22 30" fill="none" stroke="#fff" strokeWidth="2.5" /><path d="M27 11 Q34 23 27 35" fill="none" stroke="#fff" strokeWidth="2.5" /><path d="M34 2 Q42 23 34 44" fill="none" stroke="#666" strokeWidth="2" /></Ic></div>
    <div className="w-[160px] shrink-0 flex flex-col items-center pt-[13px] gap-[21px] text-[29px] leading-none text-[#f2f2f2]"><span>19:48</span><span>14/10/17</span></div>
    <div className="w-[46px] ml-[29px] shrink-0 flex items-start pt-[32px] relative mr-[62px]">
      <div className="w-[42px] h-[36px] bg-white flex flex-col gap-[4px] pt-[6px] pl-[5px]"><div className="w-[30px] h-[3px] bg-[#111]" /><div className="w-[30px] h-[3px] bg-[#111]" /><div className="w-[24px] h-[3px] bg-[#111]" /></div>
      <div className="absolute right-[-14px] bottom-[13px] w-[42px] h-[42px] rounded-full bg-[#222] border-2 border-[#999] flex items-center justify-center text-[28px] leading-none font-bold text-white">2</div>
    </div>
  </div>
);

export default function App() {
  return (
    <div className="w-[3360px] h-[2100px] overflow-hidden flex flex-col bg-[#444] font-['Open_Sans',sans-serif] relative">
      <div className="h-[59px] bg-white flex items-center shrink-0">
        <div className="w-[40px] h-[42px] ml-[4px] bg-linear-to-b from-[#cfe7e6] to-[#edf5f5] flex justify-center relative shrink-0 mt-[-6px]">
          <span className="text-[30px] leading-none font-bold text-[#1e97a5]">3</span>
        </div>
        <span className="ml-[8px] text-[30.5px] leading-none text-black whitespace-nowrap">manico fatto meglio.max - Autodesk 3ds Max 2018 - Student Version</span>
        <div className="ml-auto flex items-center mr-[51px]">
          <div className="w-[27px] h-[3px] bg-black" />
          <Ic c="w-[26px] h-[28px] ml-[94px]" v="0 0 26 28"><rect x="1" y="7" width="18" height="20" fill="none" stroke="#000" strokeWidth="2" /><path d="M7 6 V1 H25 V21 H20" fill="none" stroke="#000" strokeWidth="2" /></Ic>
          <Ic c="w-[26px] h-[28px] ml-[96px]" v="0 0 26 28"><path d="M1 1 L25 27 M25 1 L1 27" stroke="#000" strokeWidth="2" /></Ic>
        </div>
      </div>
      <Menu />
      <Toolbar />
      <Ribbon />
      <Main />
      <div className="h-[69px] shrink-0 flex items-start justify-end pt-[13px] bg-[#484848] pr-[10px] gap-[3px] relative">
        <div className="absolute left-[8px] top-[22px] w-[6px] h-[105px] border-x border-dotted border-[#bbb]" />
        <div className="w-[39px] h-[45px] rounded-[6px] bg-[#666] flex items-center justify-center"><Ic c="w-[14px] h-[22px]" v="0 0 14 22"><path d="M12 2 L3 11 L12 20" fill="none" stroke="#eee" strokeWidth="2.5" /></Ic></div>
        <div className="w-[325px] h-[45px] rounded-[6px] bg-[#666] flex items-center justify-center text-[26px] leading-none text-[#e6e6e6]">100 / 100</div>
        <div className="w-[40px] h-[45px] rounded-[6px] bg-[#666] flex items-center justify-center"><Ic c="w-[14px] h-[22px]" v="0 0 14 22"><path d="M2 2 L11 11 L2 20" fill="none" stroke="#eee" strokeWidth="2.5" /></Ic></div>
      </div>
      <Track />
      <Status />
      <Taskbar />
    </div>
  );
}
